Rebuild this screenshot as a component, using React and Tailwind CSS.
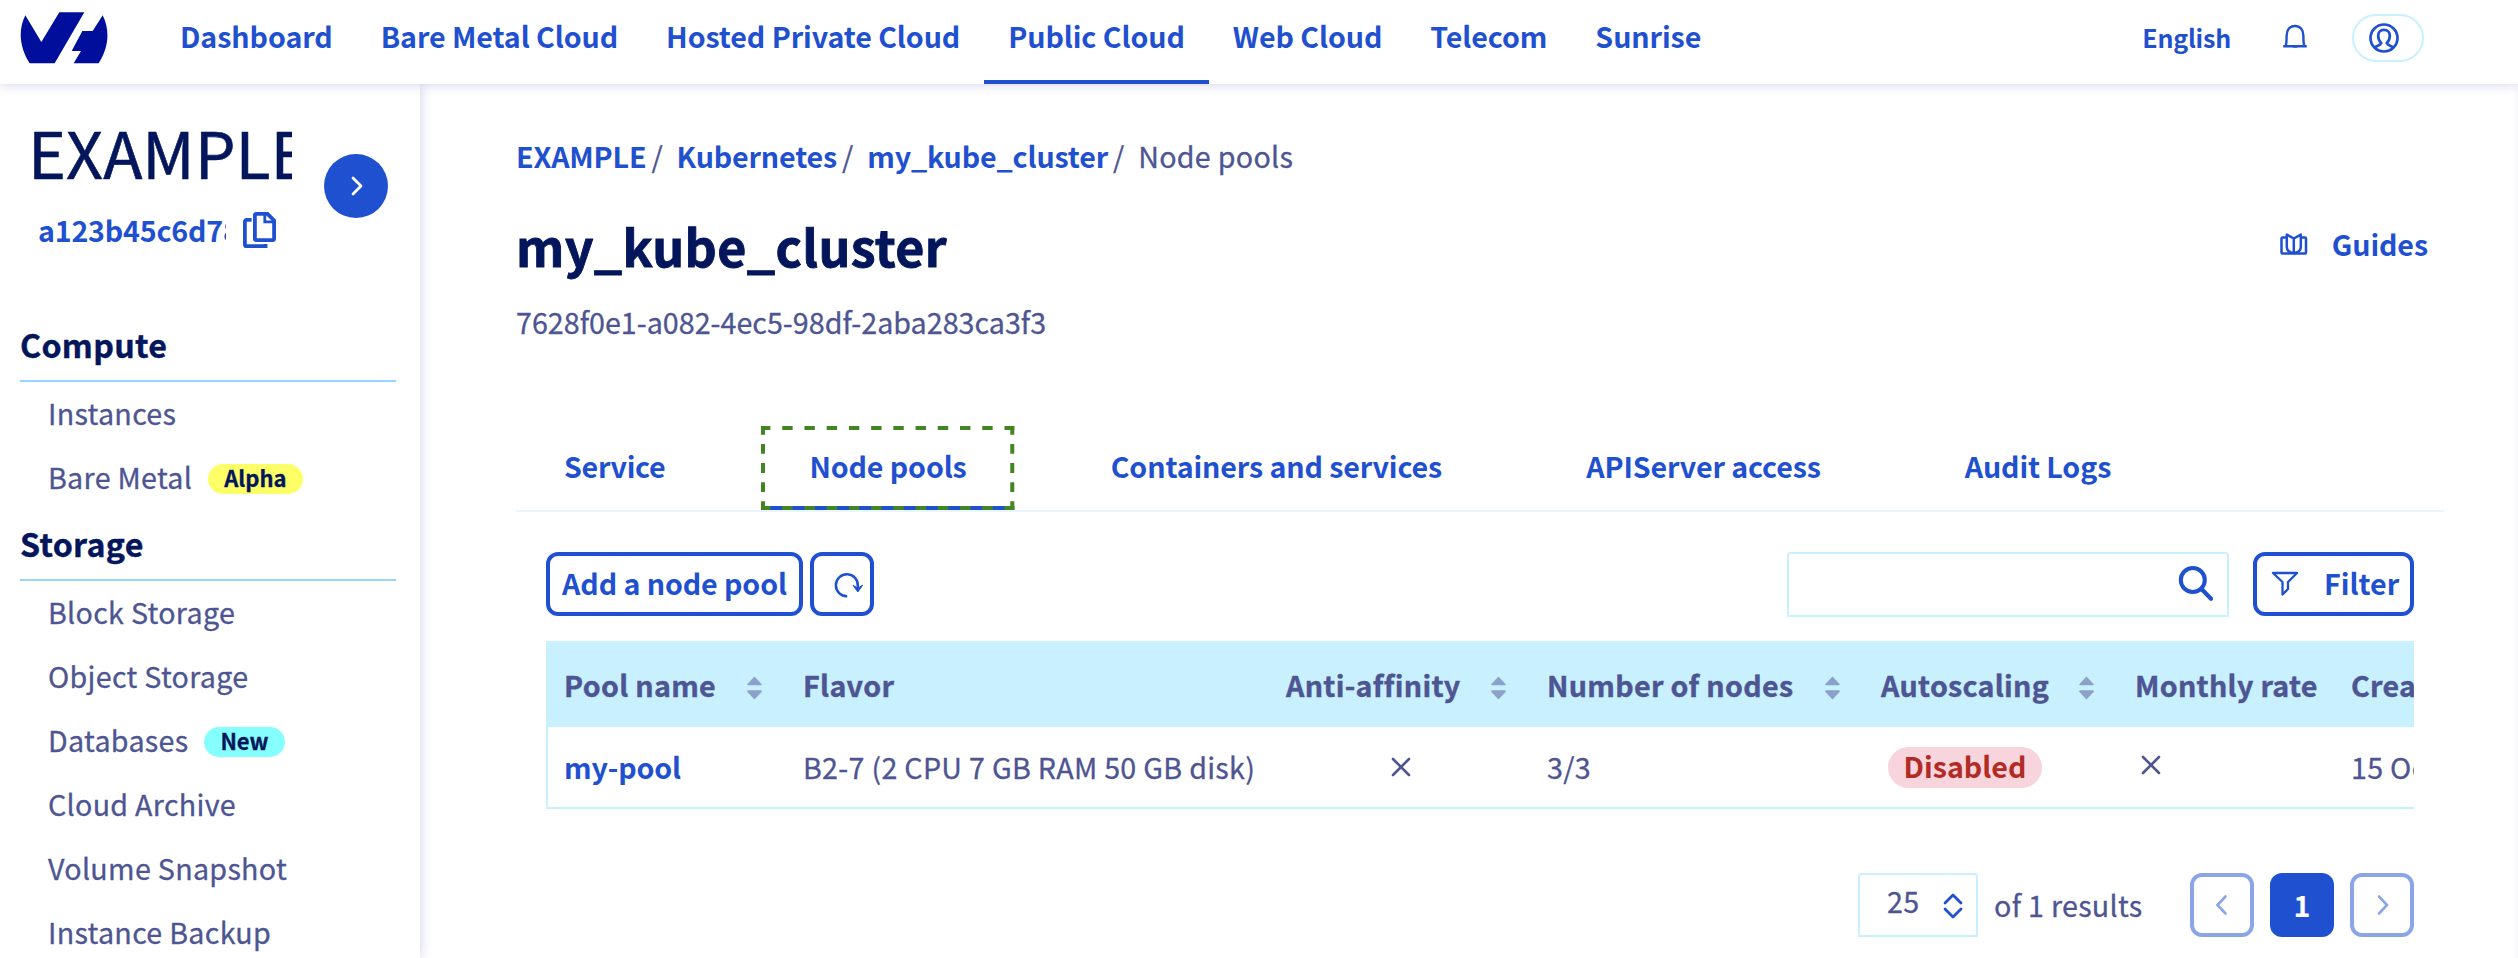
import React from "react";

const NAV = ["Dashboard", "Bare Metal Cloud", "Hosted Private Cloud", "Public Cloud", "Web Cloud", "Telecom", "Sunrise"];
const TABS = ["Service", "Node pools", "Containers and services", "APIServer access", "Audit Logs"];
const SECTIONS = [
  { title: "Compute", items: [{ label: "Instances" }, { label: "Bare Metal", badge: "Alpha", tone: "bg-[#fcff66]" }] },
  {
    title: "Storage",
    items: [
      { label: "Block Storage" },
      { label: "Object Storage" },
      { label: "Databases", badge: "New", tone: "bg-[#85fffd]" },
      { label: "Cloud Archive" },
      { label: "Volume Snapshot" },
      { label: "Instance Backup" },
    ],
  },
];
const COLUMNS = "grid grid-cols-[238px_483px_261px_334px_254px_216px_260px] w-[2046px]";
const BODY = "font-normal tracking-[0.3px] [-webkit-text-stroke:0.3px]";

function Logo() {
  return (
    <svg className="ml-5 mt-3 h-[52px] w-[88px] shrink-0" viewBox="60 36 264 156" fill="#000e9c">
      <path d="M76 46 L124 126 L178 37 H253 L164 190 H89 C58 140 54 90 76 46Z" />
      <path d="M308 46 C330 90 327 140 296 190 H221 L243 153 H215 L247 93 H278Z" />
    </svg>
  );
}

function Header() {
  return (
    <header className="relative z-10 flex h-[84px] bg-white shadow-[0_0_12px_rgba(0,14,156,0.2)]">
      <Logo />
      <nav className="ml-[48px] flex">
        {NAV.map((n) => (
          <a
            key={n}
            className={
              "h-[84px] px-6 text-[28.65px] leading-[71px] font-semibold tracking-[-0.08px] text-[#1f50d0] " +
              (n === "Public Cloud" ? "border-b-4 border-[#1f50d0]" : "")
            }
          >
            {n}
          </a>
        ))}
      </nav>
      <div className="mr-[94px] ml-auto flex text-[#1f50d0]">
        <span className="text-[25px] leading-[75px] font-semibold tracking-[-0.2px]">English</span>
        <svg className="mt-[24px] ml-[51px] h-[26px] w-[26px]" viewBox="0 0 26 26" fill="none" stroke="currentColor" strokeWidth="2.4">
          <path d="M1.2 22.2H24.8M3.6 22C4.6 20 4.6 17 4.6 12C4.6 5.5 8 2 13 2S21.4 5.5 21.4 12C21.4 17 21.4 20 22.4 22" />
          <path d="M9.5 22.5a4 2.6 0 0 0 7 0z" fill="currentColor" stroke="none" />
        </svg>
        <div className="mt-[14px] ml-[44px] h-12 w-[72px] rounded-full border-2 border-[#c8f0ff] pt-[7px] pl-[15px]">
          <svg className="h-[30px] w-[30px]" viewBox="0 0 30 30" fill="none" stroke="currentColor" strokeWidth="2.7">
            <circle cx="15" cy="15" r="13.5" />
            <path d="M5.5 25C7 22.8 11.6 22.6 12.2 20.2C10.3 18.4 9.2 15.6 9.2 12.6C9.2 9 11.6 6.8 15 6.8S20.8 9 20.8 12.6C20.8 15.6 19.7 18.4 17.8 20.2C18.4 22.6 23 22.8 24.5 25" />
          </svg>
        </div>
      </div>
    </header>
  );
}

function Sidebar() {
  return (
    <aside className="relative w-[420px] shrink-0 bg-white shadow-[0_0_12px_rgba(0,14,156,0.2)]">
      <div className="flex h-[236px]">
        <div className="ml-[28px] w-[264px]">
          <div className="mt-[22px] h-[90px] overflow-hidden text-[64.5px] leading-[90px] whitespace-nowrap text-[#03165b] [-webkit-text-stroke:0.6px]">
            EXAMPLE
          </div>
          <div className="mt-[14px] flex text-[#1f50d0]">
            <div className="ml-[10px] w-[188px] overflow-hidden text-[28.65px] leading-[39px] font-semibold tracking-[-0.2px] whitespace-nowrap">
              a123b45c6d78e
            </div>
            <svg className="mt-[2px] ml-[17px] h-[36px] w-[34px]" viewBox="0 0 34 36" fill="none" stroke="currentColor" strokeWidth="3.8">
              <path d="M13.5 1.9H24.5L31.1 8.5V26.5a1.6 1.6 0 0 1-1.6 1.6H13.5a1.6 1.6 0 0 1-1.6-1.6V3.5a1.6 1.6 0 0 1 1.6-1.6z" />
              <path d="M21.8 3V9.8H30" strokeWidth="2.8" />
              <path d="M8.6 7.9H3.6a1.7 1.7 0 0 0-1.7 1.7V32.4a1.7 1.7 0 0 0 1.7 1.7H22.5V32" />
            </svg>
          </div>
        </div>
        <div className="mt-[70px] ml-8 flex h-16 w-16 items-center justify-center rounded-full bg-[#1f50d0]">
          <svg className="h-6 w-6" viewBox="0 0 24 24" fill="none" stroke="#fff" strokeWidth="2.8" strokeLinecap="round" strokeLinejoin="round">
            <path d="M9 4L17 12L9 20" />
          </svg>
        </div>
      </div>
      <div className="flex flex-col gap-[12px]">
        {SECTIONS.map((s) => (
          <section key={s.title} className="mr-6 ml-5">
            <h2 className="h-[62px] border-b-2 border-[#97d5ff] text-[32.2px] leading-[48px] font-bold tracking-[0.3px] text-[#03165b] [-webkit-text-stroke:0.4px]">
              {s.title}
            </h2>
            <ul className="flex flex-col gap-1 pt-px pl-[28px]">
              {s.items.map((i) => (
                <li key={i.label} className="flex h-[60px] items-center text-[28.65px] leading-[60px] text-[#4d5592]">
                  <span className={BODY}>{i.label}</span>
                  {i.badge && (
                    <span
                      className={
                        "mt-[3px] ml-[16px] h-[30px] rounded-[15px] px-4 text-[22px] leading-[27px] font-bold text-[#03165b] [-webkit-text-stroke:0.3px] " +
                        i.tone
                      }
                    >
                      {i.badge}
                    </span>
                  )}
                </li>
              ))}
            </ul>
          </section>
        ))}
      </div>
    </aside>
  );
}

function Slash() {
  return <span className="mr-[14px] ml-[5px] font-normal text-[#4d5592] [-webkit-text-stroke:0.3px]">/</span>;
}

function Tabs() {
  return (
    <div className="mt-[79px] flex gap-12 border-b-2 border-[#e8f5fd]">
      {TABS.map((t) => (
        <div
          key={t}
          className={
            "relative h-[84px] px-12 text-[28.65px] leading-[79px] font-semibold text-[#1f50d0] " +
            (t === "Service" ? "tracking-[-0.3px]" : "tracking-[-0.12px]")
          }
        >
          {t}
          {t === "Node pools" && (
            <svg className="absolute inset-0 h-[84px] w-full" viewBox="0 0 253 84" preserveAspectRatio="none" fill="none" strokeWidth="4">
              <path d="M0 82H253" stroke="#1f50d0" />
              <path d="M0 2H253M0 82H253" stroke="#448523" strokeDasharray="10.4 11.8" strokeDashoffset="1" />
              <path d="M2 0V84M251 0V84" stroke="#448523" strokeDasharray="9.8 9.25" strokeDashoffset="1" />
            </svg>
          )}
        </div>
      ))}
    </div>
  );
}

function Th({ children, sort, first }) {
  return (
    <div className={"flex items-center justify-between pr-6 whitespace-nowrap " + (first ? "pl-4" : "pl-[17px]")}>
      <span>{children}</span>
      {sort && (
        <svg className="mt-[7px] h-6 w-[15px] shrink-0" viewBox="0 0 15 24" fill="#8ba1c9">
          <path d="M7.5 0.5L15 8.5Q14.6 9.3 13.6 9.3H1.4Q.4 9.3 0 8.5ZM7.5 23.5L15 15.5Q14.6 14.2 13.6 14.2H1.4Q.4 14.2 0 15.5Z" />
        </svg>
      )}
    </div>
  );
}

function Cross({ className }) {
  return (
    <svg className={className} viewBox="0 0 20 20" fill="none" stroke="#4d5592" strokeWidth="2.6" strokeLinecap="round">
      <path d="M2 2L18 18M18 2L2 18" />
    </svg>
  );
}

function Toolbar() {
  return (
    <div className="mt-10 flex h-[65px] text-[28.65px] font-semibold text-[#1f50d0]">
      <button className="h-16 w-[257px] rounded-xl border-4 border-[#1f50d0] pb-[3px] leading-[53px] tracking-[-0.1px] whitespace-nowrap">
        Add a node pool
      </button>
      <button className="ml-[7px] h-16 w-16 rounded-xl border-4 border-[#1f50d0] pt-[3px] pl-[20px]">
        <svg className="h-[28px] w-[30px]" viewBox="0 0 30 28" fill="none" stroke="currentColor" strokeWidth="2.5">
          <path d="M13.2 24.2A11 11 0 1 1 23.8 14.5V17" />
          <path d="M19 13.2L23.8 16.2L28.6 13.2L23.8 20Z" fill="currentColor" strokeWidth="1" strokeLinejoin="round" />
        </svg>
      </button>
      <div className="ml-auto h-[65px] w-[442px] rounded-t-[4px] border-2 border-[#c8f0ff] pt-[11px] pl-[386px]">
        <svg className="h-[38px] w-[38px]" viewBox="0 0 38 38" fill="none" stroke="currentColor" strokeWidth="4" strokeLinecap="round">
          <circle cx="17.8" cy="15" r="12" />
          <path d="M26.5 24L36 33.8" strokeWidth="4.2" />
        </svg>
      </div>
      <button className="ml-6 flex h-16 w-[161px] rounded-xl border-4 border-[#1f50d0] pl-[14px]">
        <svg className="mt-[15px] h-[26px] w-[28px]" viewBox="0 0 28 26" fill="none" stroke="currentColor" strokeWidth="2.3" strokeLinejoin="round">
          <path d="M2 2H26L17 11V18L11.5 23.5V11Z" />
        </svg>
        <span className="ml-[25px] leading-[54px]">Filter</span>
      </button>
    </div>
  );
}

function Table() {
  return (
    <div className="mt-6 overflow-hidden border-b-2 border-l-2 border-[#c8f0ff] text-[28.65px] text-[#4d5592]">
      <div className={COLUMNS + " -ml-0.5 box-content h-[86px] bg-[#c8f0ff] pl-0.5 leading-[87px] font-bold tracking-[0.3px] [-webkit-text-stroke:0.4px]"}>
        <Th sort first>Pool name</Th>
        <Th>Flavor</Th>
        <Th sort>Anti-affinity</Th>
        <Th sort>Number of nodes</Th>
        <Th sort>Autoscaling</Th>
        <Th>Monthly rate</Th>
        <Th>Creation date</Th>
      </div>
      <div className={COLUMNS + " h-20 leading-[79px] whitespace-nowrap"}>
        <div className="pl-4 font-semibold tracking-[-0.15px] text-[#1f50d0]">my-pool</div>
        <div className={"pl-[17px] " + BODY}>B2-7 (2 CPU 7 GB RAM 50 GB disk)</div>
        <div className="flex items-center justify-center">
          <Cross className="ml-[2px] h-5 w-5" />
        </div>
        <div className={"pl-[17px] " + BODY}>3/3</div>
        <div className="flex items-center pl-6">
          <span className="h-[41px] w-[154px] rounded-full bg-[#f8d4dc] text-center leading-[38px] font-semibold text-[#b12c25]">Disabled</span>
        </div>
        <div className="flex items-center pl-[23px]">
          <Cross className="mb-1 h-5 w-5" />
        </div>
        <div className={"pl-[17px] " + BODY}>15 Oct 2024</div>
      </div>
    </div>
  );
}

function Pagination() {
  return (
    <div className="mt-16 flex h-16 justify-end text-[28.65px] leading-[63px] text-[#4d5592]">
      <div className="flex w-[120px] rounded-t-[4px] border-2 border-[#c8f0ff]">
        <span className={"ml-[27px] leading-[52px] " + BODY}>25</span>
        <svg className="mt-[18px] ml-[23px] h-[26px] w-[22px]" viewBox="0 0 22 26" fill="none" stroke="#1f50d0" strokeWidth="2.8" strokeLinecap="round" strokeLinejoin="round">
          <path d="M3 10L11 2L19 10M3 16L11 24L19 16" />
        </svg>
      </div>
      <span className={"ml-[16px] w-[196px] whitespace-nowrap " + BODY}>of 1 results</span>
      <button className="flex w-16 items-center justify-center rounded-xl border-4 border-[#8aa6e6]">
        <svg className="mr-[2px] h-6 w-6" viewBox="0 0 24 24" fill="none" stroke="#8aa6e6" strokeWidth="2.6" strokeLinecap="round">
          <path d="M16.5 3.5L8.5 12L16.5 20.5" />
        </svg>
      </button>
      <button className="mx-4 w-16 rounded-xl bg-[#1f50d0] leading-[62px] font-bold text-white">1</button>
      <button className="flex w-16 items-center justify-center rounded-xl border-4 border-[#8aa6e6]">
        <svg className="ml-px h-6 w-6" viewBox="0 0 24 24" fill="none" stroke="#8aa6e6" strokeWidth="2.6" strokeLinecap="round">
          <path d="M8 3.5L16 12L8 20.5" />
        </svg>
      </button>
    </div>
  );
}

export default function App() {
  return (
    <div className="flex h-[958px] flex-col overflow-hidden bg-white font-['Noto_Sans_CJK_SC',sans-serif]">
      <Header />
      <div className="flex min-h-0 flex-1">
        <Sidebar />
        <main className="min-w-0 flex-1 pr-[74px] pl-24 shadow-[inset_-8px_0_8px_-8px_rgba(0,14,156,0.06)]">
          <div className="mt-[51px] flex text-[28.65px] leading-[41px] font-semibold tracking-[-0.15px] whitespace-nowrap text-[#1f50d0]">
            EXAMPLE
            <Slash />
            Kubernetes
            <Slash />
            my_kube_cluster
            <Slash />
            <span className={"text-[#4d5592] " + BODY}>Node pools</span>
          </div>
          <div className="mt-[38px] flex h-[70px]">
            <h1 className="text-[50.15px] leading-[62px] font-bold tracking-[0.35px] text-[#03165b] [-webkit-text-stroke:0.9px]">my_kube_cluster</h1>
            <div className="mr-4 ml-auto flex text-[#1f50d0]">
              <svg className="mt-[19px] h-[22px] w-[28px]" viewBox="0 0 28 22" fill="none" stroke="currentColor" strokeWidth="2.5" strokeLinejoin="round">
                <path d="M6.5 4.5H2.5a1 1 0 0 0-1 1V19.5a1 1 0 0 0 1 1H25a1 1 0 0 0 1-1V5.5a1 1 0 0 0-1-1H21" />
                <path d="M13.8 20V5.5L6.8 1.6V14C6.8 17.5 9 19.5 13.8 20C18.6 19.5 20.8 17.5 20.8 14V1.6L13.8 5.5" />
              </svg>
              <span className="ml-[24px] text-[28.65px] leading-[59px] font-semibold tracking-[-0.1px]">Guides</span>
            </div>
          </div>
          <div className="mt-[13px] text-[28.65px] leading-[50px] tracking-[0.02px] text-[#4d5592] [-webkit-text-stroke:0.3px]">
            7628f0e1-a082-4ec5-98df-2aba283ca3f3
          </div>
          <Tabs />
          <div className="mr-[30px] ml-[30px]">
            <Toolbar />
            <Table />
            <Pagination />
          </div>
        </main>
      </div>
    </div>
  );
}
